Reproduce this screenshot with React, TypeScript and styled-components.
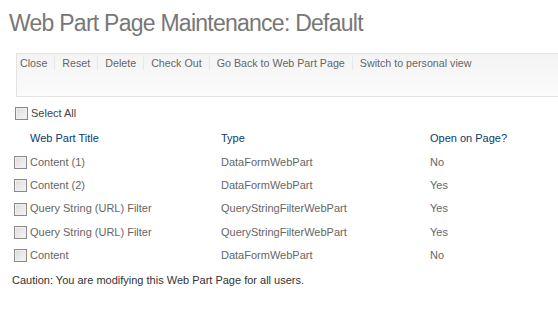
import React from "react";
import styled, { createGlobalStyle } from "styled-components";

const Global = createGlobalStyle`
  html, body { margin: 0; padding: 0; background: #fff; }
  body { font-family: "Liberation Sans", Arial, sans-serif; }
`;

const Page = styled.div`
  width: 558px;
  height: 334px;
  overflow: hidden;
  padding: 8px 0 0 0;
  box-sizing: border-box;
`;

const Title = styled.h1`
  margin: 0 0 0 9px;
  font-size: 23px;
  letter-spacing: -0.75px;
  line-height: 30px;
  font-weight: normal;
  color: #777;
  white-space: nowrap;
`;

const Toolbar = styled.div`
  margin: 15px 0 0 16px;
  height: 44px;
  border: 1px solid #e3e3e3;
  border-right: none;
  background: linear-gradient(#f4f4f4, #fbfbfb);
  display: flex;
  align-items: flex-start;
  padding: 2px 0 0 0;
  box-sizing: border-box;
`;

const ToolItem = styled.span<{ first?: boolean }>`
  font-size: 10.7px;
  line-height: 14px;
  color: #666;
  padding: 0 7px 0 7px;
  padding-left: ${(p) => (p.first ? "3px" : "7px")};
  border-left: ${(p) => (p.first ? "none" : "1px solid #e8e8e8")};
  white-space: nowrap;
`;

const SelectRow = styled.label`
  display: flex;
  align-items: center;
  gap: 3px;
  margin: 9px 0 0 15px;
  font-size: 11px;
  color: #444;
  height: 14px;
`;

const Box = styled.span`
  display: inline-block;
  width: 11px;
  height: 11px;
  border: 1px solid #8a8a8a;
  background: linear-gradient(135deg, #dcdcdc, #f6f6f6);
  box-shadow: inset 0 0 0 1px #efefef;
  flex: none;
`;

const Grid = styled.div`
  display: grid;
  grid-template-columns: 16px 191px 209px 1fr;
  grid-template-rows: 25px;
  grid-auto-rows: 23.3px;
  align-items: center;
  margin: 5px 0 0 14px;
`;

const Head = styled.div<{ col: number }>`
  font-size: 11px;
  color: #0b3a6e;
  grid-column: ${(p) => p.col};
`;

const Cell = styled.div`
  font-size: 11px;
  color: #666;
  white-space: nowrap;
`;

const BoxCell = styled.div`
  display: flex;
  align-items: center;
  padding-top: 2px;
`;

const Caution = styled.p`
  margin: 8px 0 0 12px;
  font-size: 11px;
  color: #333;
`;

const rows = [
  ["Content (1)", "DataFormWebPart", "No"],
  ["Content (2)", "DataFormWebPart", "Yes"],
  ["Query String (URL) Filter", "QueryStringFilterWebPart", "Yes"],
  ["Query String (URL) Filter", "QueryStringFilterWebPart", "Yes"],
  ["Content", "DataFormWebPart", "No"],
];

const tools = ["Close", "Reset", "Delete", "Check Out", "Go Back to Web Part Page", "Switch to personal view"];

export default function App() {
  return (
    <Page>
      <Global />
      <Title>Web Part Page Maintenance: Default</Title>
      <Toolbar>
        {tools.map((t, i) => (
          <ToolItem key={t} first={i === 0}>{t}</ToolItem>
        ))}
      </Toolbar>
      <SelectRow>
        <Box />
        Select All
      </SelectRow>
      <Grid>
        <Head col={2}>Web Part Title</Head>
        <Head col={3}>Type</Head>
        <Head col={4}>Open on Page?</Head>
        {rows.map((r, i) => (
          <React.Fragment key={i}>
            <BoxCell><Box /></BoxCell>
            <Cell>{r[0]}</Cell>
            <Cell>{r[1]}</Cell>
            <Cell>{r[2]}</Cell>
          </React.Fragment>
        ))}
      </Grid>
      <Caution>Caution: You are modifying this Web Part Page for all users.</Caution>
    </Page>
  );
}
